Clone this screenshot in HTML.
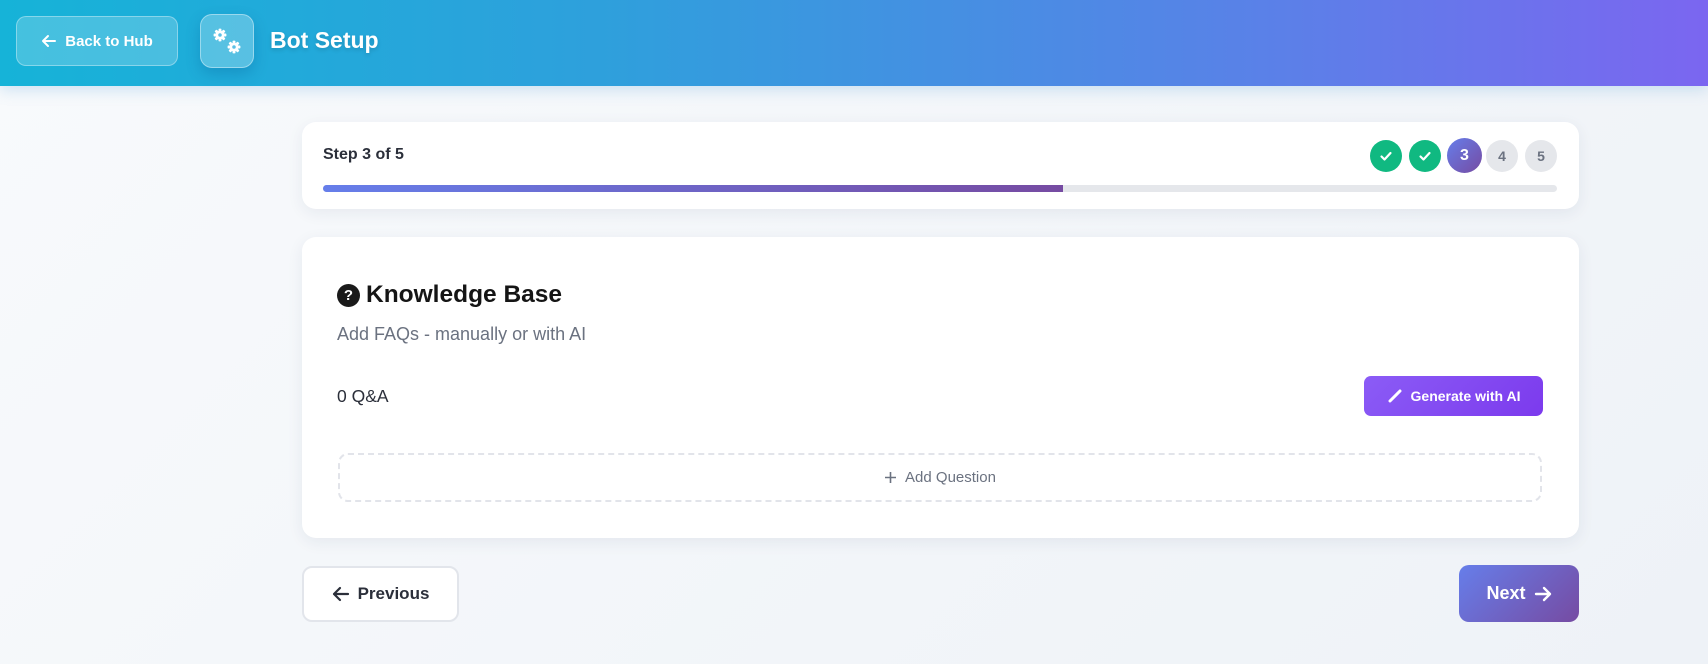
<!DOCTYPE html>
<html><head><style>
*{box-sizing:border-box;margin:0;padding:0}
body{width:1708px;height:664px;overflow:hidden;font-family:"Liberation Sans",sans-serif;background:linear-gradient(135deg,#f8fafc,#eef2f7);position:relative}
.hdr{position:absolute;left:0;top:0;width:1708px;height:86px;background:linear-gradient(90deg,#16b3d8 0%,#2ea0dc 35%,#5b80e8 75%,#7b66f0 100%);box-shadow:0 4px 14px rgba(80,160,220,.25)}
.back{position:absolute;left:16px;top:16px;width:162px;height:50px;border-radius:10px;background:rgba(255,255,255,.2);border:1px solid rgba(255,255,255,.35);color:#fff;font-weight:700;font-size:15px;display:flex;align-items:center;justify-content:center;gap:8px}
.gear{position:absolute;left:200px;top:14px;width:54px;height:54px;border-radius:12px;background:rgba(255,255,255,.25);border:1px solid rgba(255,255,255,.4);box-shadow:0 6px 14px rgba(0,80,140,.25);display:flex;align-items:center;justify-content:center}
.ttl{position:absolute;left:270px;top:27px;color:#fff;font-weight:700;font-size:23px;text-shadow:0 2px 4px rgba(0,0,0,.15)}
.card{position:absolute;left:302px;width:1277px;background:#fff;border-radius:14px;box-shadow:0 4px 16px rgba(30,40,80,.07)}
.c{position:absolute;width:32px;height:32px;border-radius:50%;top:140px;display:flex;align-items:center;justify-content:center;font-weight:700;font-size:14px}
.btn{position:absolute;display:flex;align-items:center;justify-content:center;gap:8px;font-weight:700;font-size:17px;border-radius:10px}
</style></head><body>
<div class="hdr">
<div class="back"><svg width="16" height="16" viewBox="0 0 16 16" fill="none" stroke="#fff" stroke-width="2" stroke-linecap="round" stroke-linejoin="round"><path d="M14 8H2M7 3L2 8l5 5"/></svg>Back to Hub</div>
<div class="gear"><svg width="34" height="30" viewBox="0 0 34 30" fill="#fff"><g transform="translate(10,9) scale(.8)"><circle r="5.5"/><rect x="-1.8" y="-8" width="3.6" height="16" rx="1"/><rect x="-1.8" y="-8" width="3.6" height="16" rx="1" transform="rotate(45)"/><rect x="-1.8" y="-8" width="3.6" height="16" rx="1" transform="rotate(90)"/><rect x="-1.8" y="-8" width="3.6" height="16" rx="1" transform="rotate(135)"/><circle r="2.2" fill="#5cc0e5"/></g><g transform="translate(24,21) scale(.8)"><circle r="5.5"/><rect x="-1.8" y="-8" width="3.6" height="16" rx="1"/><rect x="-1.8" y="-8" width="3.6" height="16" rx="1" transform="rotate(45)"/><rect x="-1.8" y="-8" width="3.6" height="16" rx="1" transform="rotate(90)"/><rect x="-1.8" y="-8" width="3.6" height="16" rx="1" transform="rotate(135)"/><circle r="2.2" fill="#5cc0e5"/></g></svg></div>
<div class="ttl">Bot Setup</div>
</div>

<div class="card" style="top:122px;height:87px"></div>
<div style="position:absolute;left:323px;top:146px;font-weight:700;font-size:16px;color:#2b2f3a">Step 3 of 5</div>
<div style="position:absolute;left:323px;top:185px;width:1234px;height:7px;border-radius:4px;background:#e5e7eb;overflow:hidden"><div style="width:740px;height:7px;background:linear-gradient(90deg,#667eea,#764ba2)"></div></div>
<div class="c" style="left:1370px;background:#10b981"><svg width="14" height="14" viewBox="0 0 14 14" fill="none" stroke="#fff" stroke-width="2.2" stroke-linecap="round" stroke-linejoin="round"><path d="M2.5 7.5l3 3 6-6.5"/></svg></div>
<div class="c" style="left:1409px;background:#10b981"><svg width="14" height="14" viewBox="0 0 14 14" fill="none" stroke="#fff" stroke-width="2.2" stroke-linecap="round" stroke-linejoin="round"><path d="M2.5 7.5l3 3 6-6.5"/></svg></div>
<div class="c" style="left:1447px;top:138px;width:35px;height:35px;background:linear-gradient(135deg,#667eea,#764ba2);color:#fff;font-size:16px">3</div>
<div class="c" style="left:1486px;background:#e5e7eb;color:#6b7280">4</div>
<div class="c" style="left:1525px;background:#e5e7eb;color:#6b7280">5</div>

<div class="card" style="top:237px;height:301px"></div>
<div style="position:absolute;left:337px;top:281px;display:flex;align-items:center;gap:6px"><div style="width:23px;height:23px;border-radius:50%;background:#1a1a1a;color:#fff;font-weight:700;font-size:15px;display:flex;align-items:center;justify-content:center">?</div><span style="font-weight:700;font-size:24.5px;color:#151515">Knowledge Base</span></div>
<div style="position:absolute;left:337px;top:324px;font-size:18px;color:#6b7280">Add FAQs - manually or with AI</div>
<div style="position:absolute;left:337px;top:386px;font-size:17.5px;color:#2b2f3a">0 Q&amp;A</div>
<div class="btn" style="left:1364px;top:376px;width:179px;height:40px;background:linear-gradient(135deg,#8b5cf6,#7c3aed);color:#fff;font-size:14px;border-radius:7px"><svg width="16" height="16" viewBox="0 0 16 16"><path d="M3 13L13 3" stroke="#fff" stroke-width="3" stroke-linecap="round"/></svg>Generate with AI</div>
<div style="position:absolute;left:338px;top:453px;width:1204px;height:49px;border:2px dashed #e2e4ea;border-radius:10px;display:flex;align-items:center;justify-content:center;gap:8px;color:#6b7280;font-size:15px"><svg width="13" height="13" viewBox="0 0 13 13" stroke="#6b7280" stroke-width="1.6"><path d="M6.5 1v11M1 6.5h11"/></svg>Add Question</div>

<div class="btn" style="left:302px;top:566px;width:157px;height:56px;background:#fff;border:2px solid #e2e5eb;color:#2b2f3a"><svg width="18" height="16" viewBox="0 0 18 16" fill="none" stroke="#2b2f3a" stroke-width="2.2" stroke-linecap="round" stroke-linejoin="round"><path d="M16 8H2M8 2L2 8l6 6"/></svg>Previous</div>
<div class="btn" style="left:1459px;top:565px;width:120px;height:57px;background:linear-gradient(135deg,#667eea,#764ba2);color:#fff;font-size:18px">Next<svg width="18" height="16" viewBox="0 0 18 16" fill="none" stroke="#fff" stroke-width="2.4" stroke-linecap="round" stroke-linejoin="round"><path d="M2 8h14M10 2l6 6-6 6"/></svg></div>
</body></html>
